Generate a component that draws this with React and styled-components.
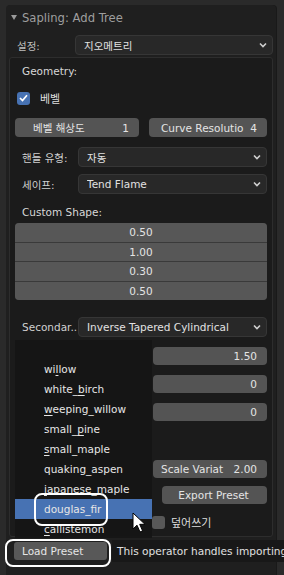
import React from "react";
import styled, { createGlobalStyle } from "styled-components";

const Global = createGlobalStyle`
  html, body { margin: 0; padding: 0; background: #2a2a2a; overflow: hidden; }
  body { font-family: "DejaVu Sans", "Noto Sans CJK KR", sans-serif; }
`;

const Screen = styled.div`
  position: relative;
  width: 284px;
  height: 575px;
  overflow: hidden;
  background: #2a2a2a;
`;

const Panel = styled.div`
  margin: 5px 0 0 6px;
  width: 270px;
  height: 570px;
  background: #1f1f1f;
  border-radius: 4px 4px 0 0;
  box-shadow: 1px 0 0 #191919;
  display: flex;
  flex-direction: column;
`;

const Header = styled.div`
  height: 25px;
  display: flex;
  align-items: center;
  padding-left: 5px;
  gap: 5px;
  color: #9e9e9e;
  font-size: 11.6px;
`;

const Tri = styled.span`
  width: 0;
  height: 0;
  border-left: 3.5px solid transparent;
  border-right: 3.5px solid transparent;
  border-top: 5px solid #9a9a9a;
`;

const PropRow = styled.div`
  display: flex;
  align-items: center;
  height: ${(p) => p.h || 20}px;
  margin-top: ${(p) => p.mt || 0}px;
  padding-left: ${(p) => p.pl || 0}px;
  padding-right: ${(p) => p.pr || 0}px;
`;

const Label = styled.div`
  width: ${(p) => p.w}px;
  flex: none;
  color: ${(p) => p.c || "#d0d0d0"};
  font-size: 10.5px;
  white-space: nowrap;
  overflow: hidden;
`;

const Dropdown = styled.div`
  flex: 1;
  height: 100%;
  box-sizing: border-box;
  background: #282828;
  border: 1px solid #363636;
  border-radius: 4px;
  display: flex;
  align-items: center;
  padding: 0 5px 0 8px;
  color: #e2e2e2;
  font-size: 10.5px;
  span { flex: 1; white-space: nowrap; overflow: hidden; }
`;

const Chevron = () => (
  <svg width="8" height="6" viewBox="0 0 8 6">
    <path d="M1 1.5 L4 4.5 L7 1.5" fill="none" stroke="#cfcfcf" strokeWidth="1.6" />
  </svg>
);

const Box = styled.div`
  margin: 2px 3px 0 3px;
  height: 480px;
  box-sizing: border-box;
  background: #1b1b1b;
  border: 1px solid #2d2d2d;
  border-radius: 3px;
  padding: 0 5px 0 5px;
  display: flex;
  flex-direction: column;
`;

const SectionLabel = styled.div`
  height: ${(p) => p.h || 16}px;
  margin-top: ${(p) => p.mt}px;
  padding-left: 7px;
  display: flex;
  align-items: center;
  color: #d8d8d8;
  font-size: 10.5px;
`;

const Check = styled.div`
  width: 13px;
  height: 13px;
  border-radius: 3px;
  background: ${(p) => (p.on ? "#4772b3" : "#585858")};
  display: flex;
  align-items: center;
  justify-content: center;
  flex: none;
`;

const CheckText = styled.span`
  margin-left: ${(p) => p.ml || 10}px;
  color: #dedede;
  font-size: 11px;
`;

const Pair = styled.div`
  display: flex;
  gap: 10px;
  height: 19px;
  margin-top: ${(p) => p.mt}px;
`;

const NumButton = styled.div`
  flex: 1;
  background: #545454;
  border-radius: 4px;
  display: flex;
  align-items: center;
  justify-content: space-between;
  padding: 0 10px 0 ${(p) => p.pl}px;
  color: #e4e4e4;
  font-size: 10.5px;
  white-space: nowrap;
  overflow: hidden;
`;

const Column = styled.div`
  margin-top: 3px;
  border-radius: 4px;
  overflow: hidden;
  display: flex;
  flex-direction: column;
  gap: 1px;
  background: #3a3a3a;
`;

const ColCell = styled.div`
  height: 18.5px;
  background: #575757;
  display: flex;
  align-items: center;
  justify-content: center;
  color: #e4e4e4;
  font-size: 10.5px;
`;

const FieldRow = styled.div`
  display: flex;
  align-items: center;
  height: 18px;
  margin-top: ${(p) => p.mt}px;
  padding-left: 7px;
`;

const Field = styled.div`
  margin-left: auto;
  width: ${(p) => p.w || 114}px;
  height: 100%;
  background: #545454;
  border-radius: 4px;
  display: flex;
  align-items: center;
  justify-content: ${(p) => p.j || "flex-end"};
  padding: 0 10px 0 8px;
  box-sizing: border-box;
  color: #e4e4e4;
  font-size: 10.5px;
  white-space: nowrap;
`;

const Menu = styled.div`
  position: absolute;
  left: 15px;
  top: 340px;
  width: 137px;
  height: 198px;
  padding-top: 19px;
  box-sizing: border-box;
  background: rgba(22, 22, 22, 0.97);
  display: flex;
  flex-direction: column;
`;

const Item = styled.div`
  height: 20px;
  flex: none;
  display: flex;
  align-items: center;
  padding-left: 29px;
  background: ${(p) => (p.active ? "#4772b3" : "transparent")};
  color: #e6e6e6;
  font-size: 10.5px;
  u { text-decoration: underline; text-underline-offset: 2px; }
`;

const LoadButton = styled.div`
  margin: 5px 0 0 8px;
  width: 93px;
  height: 18px;
  background: #585858;
  border-radius: 3px;
  display: flex;
  align-items: center;
  padding-left: 8px;
  box-sizing: border-box;
  color: #e6e6e6;
  font-size: 10.5px;
`;

const Tooltip = styled.div`
  position: absolute;
  left: 112px;
  top: 540px;
  height: 22px;
  width: 172px;
  overflow: hidden;
  background: #181818;
  display: flex;
  align-items: center;
  padding-left: 5px;
  box-sizing: border-box;
  color: #e0e0e0;
  font-size: 10.6px;
  white-space: nowrap;
`;

const Ring = styled.div`
  position: absolute;
  left: ${(p) => p.x}px;
  top: ${(p) => p.y}px;
  width: ${(p) => p.w}px;
  height: ${(p) => p.h}px;
  box-sizing: border-box;
  border: 2px solid #ffffff;
  border-radius: 8px;
  pointer-events: none;
`;

const Cursor = styled.svg`
  position: absolute;
  left: 132px;
  top: 512px;
`;

const items = [
  ["wi", "l", "low"],
  ["white_", "b", "irch"],
  ["", "w", "eeping_willow"],
  ["small_", "p", "ine"],
  ["", "s", "mall_maple"],
  ["quaking_aspen", "", ""],
  ["", "j", "apanese_maple"],
  ["douglas_fir", "", ""],
  ["", "c", "allistemon"],
];

export default function App() {
  return (
    <Screen>
      <Global />
      <Panel>
        <Header>
          <Tri />
          <span>Sapling: Add Tree</span>
        </Header>
        <PropRow mt={5} pl={11} pr={3}>
          <Label w={58} c="#bdbdbd">설정:</Label>
          <Dropdown>
            <span>지오메트리</span>
            <Chevron />
          </Dropdown>
        </PropRow>
        <Box>
          <SectionLabel mt={4} h={18}>Geometry:</SectionLabel>
          <PropRow mt={9} h={18} pl={2}>
            <Check on>
              <svg width="9" height="8" viewBox="0 0 9 8">
                <path d="M1 4 L3.5 6.5 L8 1.2" fill="none" stroke="#fff" strokeWidth="1.7" />
              </svg>
            </Check>
            <CheckText>베벨</CheckText>
          </PropRow>
          <Pair mt={11}>
            <NumButton pl={18}>
              <span>베벨 해상도</span>
              <span>1</span>
            </NumButton>
            <NumButton pl={12}>
              <span>Curve Resolutio</span>
              <span>4</span>
            </NumButton>
          </Pair>
          <PropRow mt={10} pl={7}>
            <Label w={56}>핸들 유형:</Label>
            <Dropdown>
              <span>자동</span>
              <Chevron />
            </Dropdown>
          </PropRow>
          <PropRow mt={7} pl={7}>
            <Label w={56}>세이프:</Label>
            <Dropdown>
              <span>Tend Flame</span>
              <Chevron />
            </Dropdown>
          </PropRow>
          <SectionLabel mt={10}>Custom Shape:</SectionLabel>
          <Column>
            <ColCell>0.50</ColCell>
            <ColCell>1.00</ColCell>
            <ColCell>0.30</ColCell>
            <ColCell>0.50</ColCell>
          </Column>
          <PropRow mt={17} pl={7}>
            <Label w={56}>Secondar..</Label>
            <Dropdown>
              <span>Inverse Tapered Cylindrical</span>
              <Chevron />
            </Dropdown>
          </PropRow>
          <FieldRow mt={10}>
            <Field>1.50</Field>
          </FieldRow>
          <FieldRow mt={10}>
            <Field>0</Field>
          </FieldRow>
          <FieldRow mt={10}>
            <Field>0</Field>
          </FieldRow>
          <FieldRow mt={39}>
            <Field j="space-between">
              <span>Scale Variat</span>
              <span>2.00</span>
            </Field>
          </FieldRow>
          <FieldRow mt={8}>
            <Field w={105} j="center">Export Preset</Field>
          </FieldRow>
          <PropRow mt={9} h={18} pl={137}>
            <Check />
            <CheckText ml={6}>덮어쓰기</CheckText>
          </PropRow>
        </Box>
        <LoadButton>Load Preset</LoadButton>
      </Panel>

      <Menu>
        {items.map(([a, u, b], i) => (
          <Item key={i} active={i === 7}>
            {a}
            {u && <u>{u}</u>}
            {b}
          </Item>
        ))}
      </Menu>

      <Tooltip>This operator handles importing existing presets</Tooltip>

      <Ring x={34} y={493} w={74} h={33} />
      <Ring x={5} y={539} w={106} h={28} />

      <Cursor width="16" height="22" viewBox="0 0 16 22">
        <path
          d="M1 1 L1 17 L5 13.2 L8 20 L10.6 18.8 L7.7 12.3 L13 12.3 Z"
          fill="#ffffff"
          stroke="#000000"
          strokeWidth="1"
          strokeLinejoin="round"
        />
      </Cursor>
    </Screen>
  );
}
